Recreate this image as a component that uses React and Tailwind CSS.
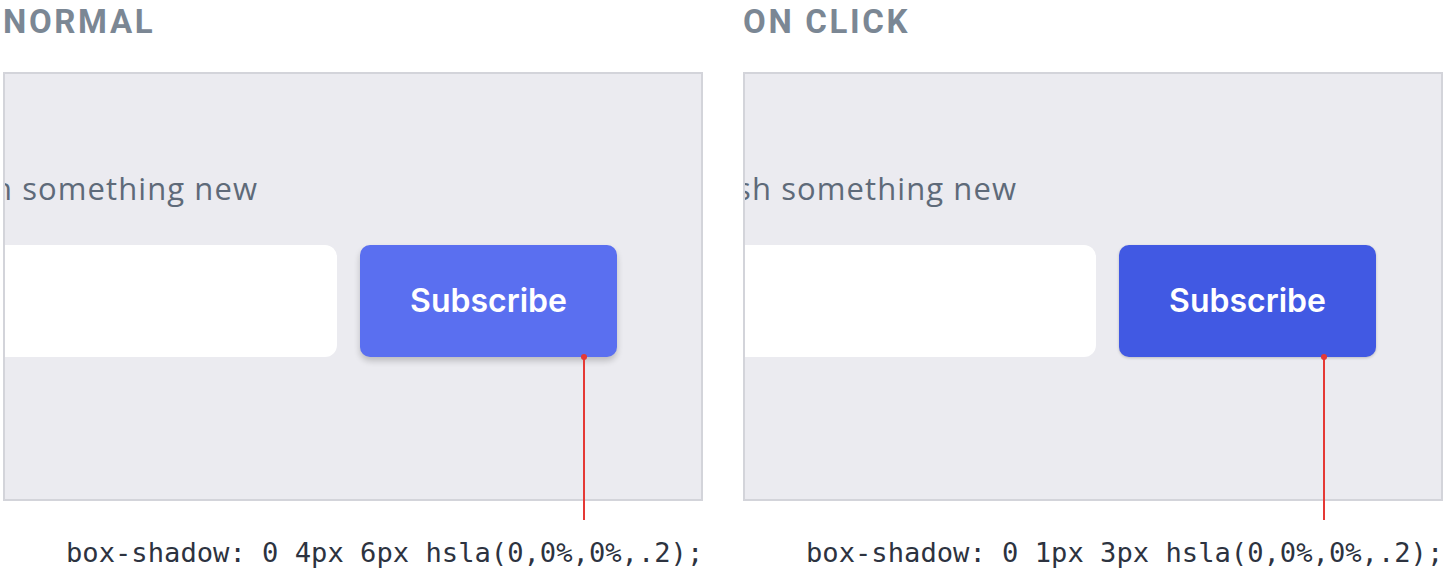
import React from 'react';

const Panel = ({ label, shift, buttonClass, lineX, code }) => {
  return (
    <div className="w-[700px] flex flex-col">
      <h2 className="h-[72px] pt-[4px] text-[33px] leading-[36px] font-bold tracking-[0.08em] text-[#7b8794] [font-family:Roboto,'Liberation_Sans',sans-serif]">
        {label}
      </h2>
      <div className="relative h-[429px] border-2 border-[#d3d4da] bg-[#ebebf0]">
        <div className="h-full overflow-hidden">
          <div className="pt-[94px]" style={{ width: shift.text }}>
            <div className="flex justify-end whitespace-nowrap text-[31px] leading-[40px] tracking-[0.035em] text-[#5e6a79] [font-family:'Open_Sans','Liberation_Sans',sans-serif]">
              Be the first to know when we publish something new
            </div>
          </div>
          <div className="mt-[37px] flex items-start gap-[23px]" style={{ marginLeft: shift.input - 600 }}>
            <div className="h-[112px] w-[600px] shrink-0 rounded-[12px] bg-white" />
            <button
              type="button"
              className={`h-[112px] w-[257px] shrink-0 rounded-[10px] text-[32px] font-semibold text-white [font-family:Inter,'Liberation_Sans',sans-serif] ${buttonClass}`}
            >
              Subscribe
            </button>
          </div>
        </div>
        <div className="absolute top-[283px] w-[2px] h-[163px] bg-[#e53935]" style={{ left: lineX }}>
          <div className="absolute -top-[3px] -left-[2px] w-[6px] h-[6px] rounded-full bg-[#e53935]" />
        </div>
      </div>
      <p className="mt-[36px] pl-[63px] whitespace-nowrap text-[27.15px] leading-[32px] text-[#2d3340] [font-family:'DejaVu_Sans_Mono','Liberation_Mono',monospace]">
        {code}
      </p>
    </div>
  );
};

export default function App() {
  return (
    <div className="w-[1444px] h-[584px] bg-white flex gap-[40px] pl-[3px] overflow-hidden">
      <Panel
        label="NORMAL"
        shift={{ text: 253, input: 332 }}
        buttonClass="bg-[#5a6ff0] shadow-[0_4px_6px_hsla(0,0%,0%,.2)]"
        lineX={578}
        code="box-shadow: 0 4px 6px hsla(0,0%,0%,.2);"
      />
      <Panel
        label="ON CLICK"
        shift={{ text: 272, input: 351 }}
        buttonClass="bg-[#4159e3] shadow-[0_1px_3px_hsla(0,0%,0%,.2)]"
        lineX={578}
        code="box-shadow: 0 1px 3px hsla(0,0%,0%,.2);"
      />
    </div>
  );
}
